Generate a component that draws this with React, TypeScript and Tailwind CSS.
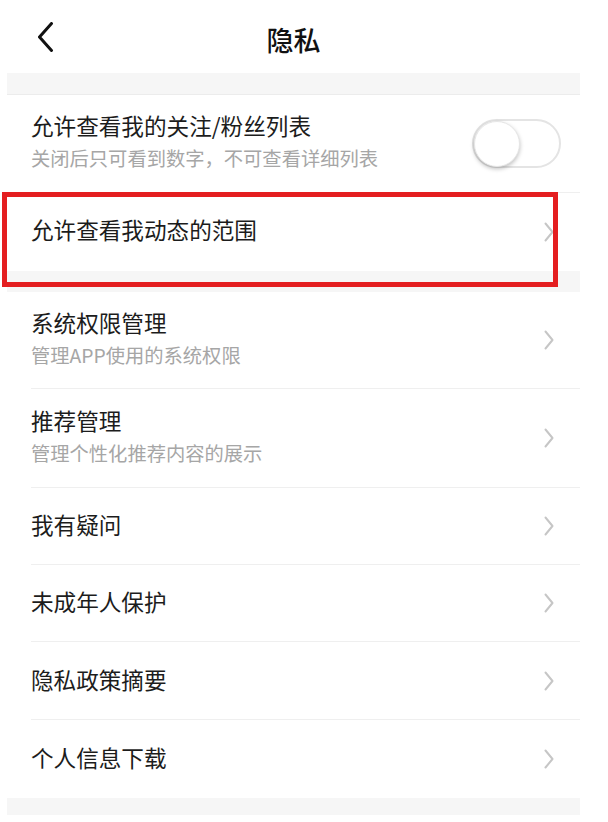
import React from "react";

type Item = {
  title: string;
  sub?: string;
  h: string;
  last?: boolean;
};

const items: Item[] = [
  { title: "系统权限管理", sub: "管理APP使用的系统权限", h: "h-[97px]" },
  { title: "推荐管理", sub: "管理个性化推荐内容的展示", h: "h-[99px]" },
  { title: "我有疑问", h: "h-[77px]" },
  { title: "未成年人保护", h: "h-[77px]" },
  { title: "隐私政策摘要", h: "h-[78px]" },
  { title: "个人信息下载", h: "h-[78px]", last: true },
];

const Chevron = () => (
  <svg width="10" height="20" viewBox="0 0 10 20" fill="none" className="shrink-0">
    <path d="M1.5 1.5 L8.5 10 L1.5 18.5" stroke="#c6c6c6" strokeWidth="2" strokeLinecap="round" strokeLinejoin="round" />
  </svg>
);

const Toggle = () => (
  <div className="w-[89px] h-[49px] rounded-full border-2 border-[#e4e4e4] bg-white flex items-center">
    <div className="w-[46px] h-[46px] rounded-full bg-white shadow-[0_2px_4px_rgba(0,0,0,0.25)] border border-[#e6e6e6]" />
  </div>
);

export default function App() {
  return (
    <div
      className="relative w-[608px] h-[822px] bg-white overflow-hidden"
      style={{ fontFamily: '"Noto Sans CJK SC", "Noto Sans", sans-serif' }}
    >
      <div className="ml-[7px] w-[573px]">
        {/* header */}
        <div className="h-[73px] grid grid-cols-[1fr_auto_1fr] items-center">
          <div className="pl-[31px] flex items-center">
            <svg width="16" height="30" viewBox="0 0 16 30" fill="none">
              <path d="M13.5 1.5 L1.5 15 L13.5 28.5" stroke="#111" strokeWidth="3" strokeLinecap="round" strokeLinejoin="round" />
            </svg>
          </div>
          <div className="text-[27px] font-medium text-[#111] leading-none pt-[5px]">隐私</div>
          <div />
        </div>

        <div className="h-[22px] bg-[#f6f6f6] border-b border-[#ececec]" />

        {/* first group */}
        <div className="h-[98px] border-b border-[#efefef] flex items-center justify-between pl-[24px] pr-[19px]">
          <div className="flex flex-col pb-[3px]">
            <span className="text-[22.6px] leading-[32px] text-[#1c1c1c]">允许查看我的关注/粉丝列表</span>
            <span className="text-[19.3px] leading-[32px] text-[#a6a6a6]">关闭后只可看到数字，不可查看详细列表</span>
          </div>
          <Toggle />
        </div>
        <div className="h-[78px] flex items-center justify-between pl-[24px] pr-[26px]">
          <span className="text-[22.6px] leading-[32px] text-[#1c1c1c] pb-[5px]">允许查看我动态的范围</span>
          <Chevron />
        </div>

        <div className="h-[21px] bg-[#f6f6f6]" />

        {/* second group */}
        <div className="pl-[24px]">
          {items.map((it) => (
            <div
              key={it.title}
              className={`${it.h} ${it.last ? "" : "border-b border-[#efefef]"} flex items-center justify-between pr-[26px]`}
            >
              <div className="flex flex-col pb-[2px]">
                <span className="text-[22.6px] leading-[32px] text-[#1c1c1c]">{it.title}</span>
                {it.sub && <span className="text-[19.3px] leading-[32px] text-[#a6a6a6]">{it.sub}</span>}
              </div>
              <Chevron />
            </div>
          ))}
        </div>

        <div className="h-[17px] bg-[#f6f6f6]" />
      </div>

      {/* red annotation box */}
      <div className="absolute left-[2px] top-[192px] w-[556px] h-[95px] border-[5px] border-[#e41e20] pointer-events-none" />
    </div>
  );
}
